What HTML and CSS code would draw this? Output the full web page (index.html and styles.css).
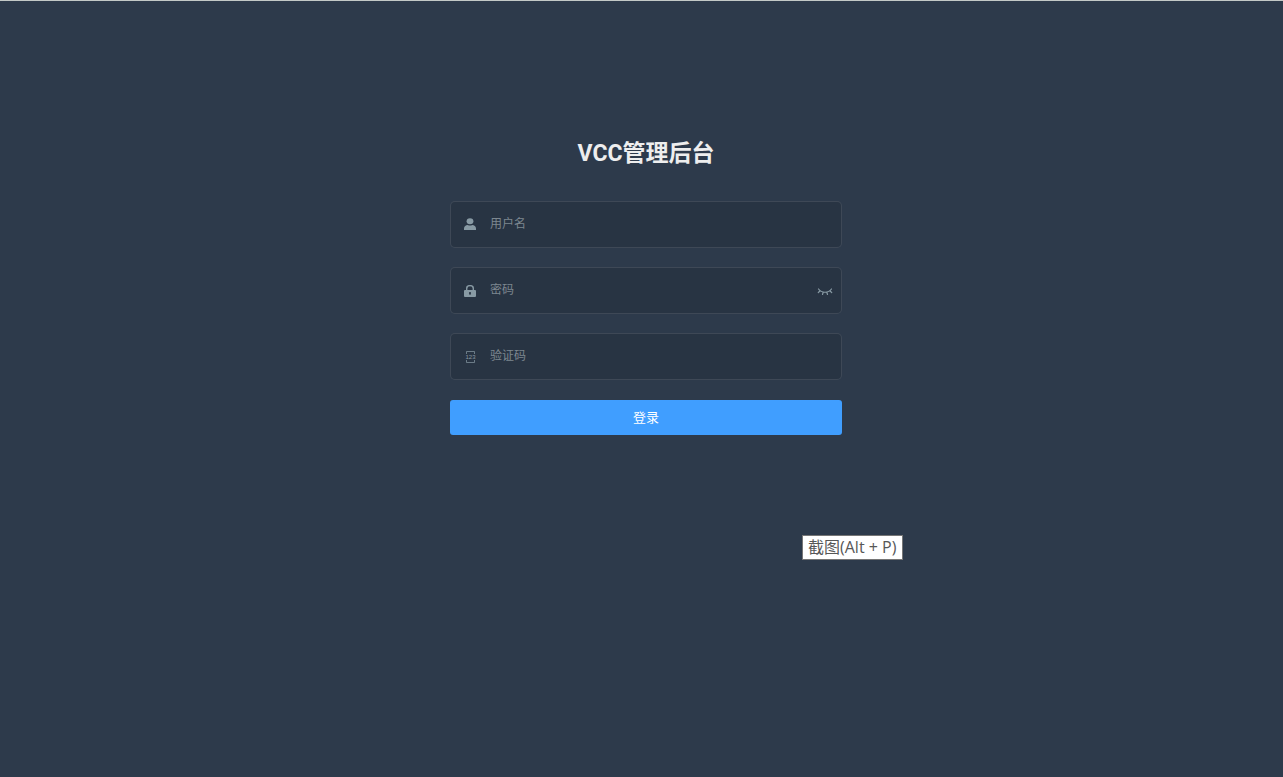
FILE: index.html
```
<!DOCTYPE html>
<html lang="zh-CN">
<head>
  <meta charset="UTF-8" />
  <meta name="viewport" content="width=device-width, initial-scale=1.0" />
  <title>VCC管理后台</title>
  <link rel="stylesheet" href="styles.css">
</head>
<body>
  <main class="login-container">
    <form class="login-form" onsubmit="return false">
      <h1 class="title">VCC管理后台</h1>

      <div class="form-item">
        <label class="icon" for="username" aria-label="用户名">
          <svg width="12" height="14" viewBox="0 0 12 14" fill="currentColor">
            <ellipse cx="6" cy="3.200" rx="3.400" ry="3" />
            <path d="M0 12v-1.600C0 8.400 1.800 7.200 3.800 7c1.300.7 3.100.7 4.400 0 2 .2 3.800 1.400 3.800 3.400V12z" />
          </svg>
        </label>
        <input id="username" type="text" placeholder="用户名">
      </div>

      <div class="form-item">
        <label class="icon" for="password" aria-label="密码">
          <svg width="12" height="12" viewBox="0 0 12 12" fill="currentColor">
            <path d="M2.700 5V3.400a3.300 2.800 0 0 1 6.600 0V5" fill="none" stroke="currentColor" stroke-width="1.400" />
            <path fill-rule="evenodd" d="M1 5h10a1 1 0 0 1 1 1v5a1 1 0 0 1-1 1H1a1 1 0 0 1-1-1V6a1 1 0 0 1 1-1zM6 7a1 1 0 0 0-.5 1.900V10h1V8.900A1 1 0 0 0 6 7z" />
          </svg>
        </label>
        <input id="password" type="password" placeholder="密码">
        <button class="show-pwd" type="button" aria-label="显示密码">
          <svg width="16" height="10" viewBox="0 0 16 10" fill="none" stroke="currentColor" stroke-width="1.200" stroke-linecap="round">
            <path d="M1.500 2C4.500 6.300 11.500 6.300 14.500 2M3 4L1.300 5.500M6.200 5.300L5.500 7.500M9.800 5.300l.7 2.200M13 4l1.700 1.500" />
          </svg>
        </button>
      </div>

      <div class="form-item">
        <label class="icon" for="code" aria-label="验证码">
          <svg width="12" height="12" viewBox="0 0 12 12" fill="none" stroke="currentColor">
            <path d="M2.500 3V.5h8V3M2.500 9v2.500h8V9" stroke-opacity=".7" />
            <text class="digits" x="6.500" y="8" text-anchor="middle">123</text>
          </svg>
        </label>
        <input id="code" type="text" placeholder="验证码">
      </div>

      <button class="login-btn" type="submit">登录</button>
      <div class="tooltip" role="tooltip">截图(Alt + P)</div>
    </form>
  </main>
</body>
</html>
```

FILE: styles.css
```
* {
  box-sizing: border-box;
}
body {
  margin: 0;
  font-family: "Noto Sans CJK SC", sans-serif;
}
.login-container {
  min-height: 100vh;
  padding: 138px 0 0 9px;
  border-top: 1px solid #c3c9c7;
  background: #2d3a4b;
}
.login-form {
  position: relative;
  max-width: 392px;
  margin: 0 auto;
}
.title {
  margin: 0 0 32px;
  font-family: Roboto, "Noto Sans CJK SC", sans-serif;
  font-size: 23px;
  line-height: 30px;
  font-weight: bold;
  text-align: center;
  color: #eee;
}
.form-item {
  display: flex;
  align-items: center;
  height: 47px;
  margin-bottom: 19px;
  border: 1px solid rgba(255, 255, 255, 0.1);
  border-radius: 5px;
  background: rgba(0, 0, 0, 0.1);
  color: #889aa4;
}
.icon {
  display: flex;
  width: 39px;
  padding-left: 13px;
}
.digits {
  font-family: "Liberation Sans", sans-serif;
  font-size: 6px;
  fill: currentColor;
  stroke: none;
}
.form-item input {
  flex: 1;
  min-width: 0;
  height: 45px;
  padding: 0 0 4px;
  border: 0;
  outline: 0;
  background: transparent;
  color: #fff;
  font-family: inherit;
  font-size: 12px;
}
.form-item input::placeholder {
  color: #7d8790;
}
.show-pwd {
  display: flex;
  padding: 2px 8px 0;
  border: 0;
  background: transparent;
  color: #889aa4;
  cursor: pointer;
}
.login-btn {
  display: block;
  width: 100%;
  height: 35px;
  margin-top: 20px;
  padding: 0 0 2px;
  border: 0;
  border-radius: 3px;
  background: #409eff;
  color: #fff;
  font-family: inherit;
  font-size: 13px;
  cursor: pointer;
}
.tooltip {
  position: absolute;
  top: 396px;
  left: 352px;
  padding: 0 6px 0 5px;
  border: 1px solid #767676;
  background: #fff;
  color: #575757;
  font-family: "Open Sans", "Noto Sans CJK SC", sans-serif;
  font-size: 16px;
  line-height: 23px;
  white-space: nowrap;
}
```
